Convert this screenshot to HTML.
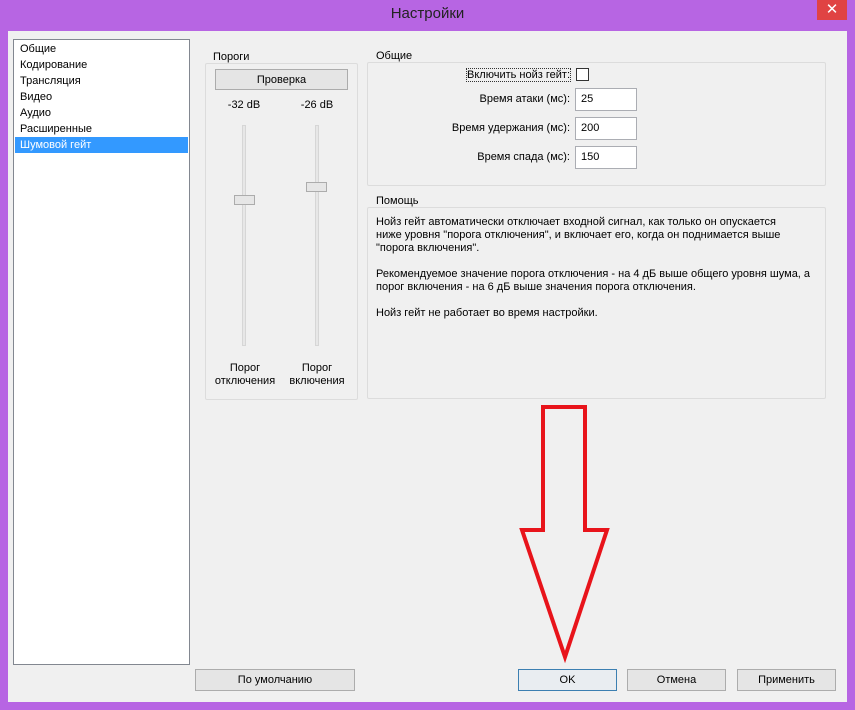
<!DOCTYPE html>
<html><head><meta charset="utf-8"><style>
*{margin:0;padding:0;box-sizing:border-box}
body{width:855px;height:710px;background:#b765e3;font-family:"Liberation Sans",sans-serif;font-size:11px;color:#000;position:relative;overflow:hidden}
.a{position:absolute}
.client{left:8px;top:31px;width:839px;height:671px;background:#f0f0f0}
.title{left:0;top:5px;width:855px;text-align:center;font-size:15px;color:#222}
.close{left:817px;top:0;width:30px;height:20px;background:#e04343;color:#fff;text-align:center;font-size:15px;line-height:20px}
.list{left:13px;top:39px;width:177px;height:626px;background:#fff;border:1px solid #828790}
.it{left:7px;height:16px;line-height:16px}
.sel{left:15px;top:137px;width:173px;height:16px;background:#3399ff;color:#fff;padding-left:5px;line-height:16px}
.grp{border:1px solid #dcdcdc;border-radius:2px}
.gl{background:#f0f0f0;padding:0 3px}
.btn{background:#e5e5e5;border:1px solid #acacac;text-align:center;line-height:20px}
.inp{background:#fff;border:1px solid #abadb3;width:62px;height:23px;padding:4px 0 0 5px}
.lab{text-align:right;width:200px}
.track{width:4px;background:#e7e7e7;border:1px solid #d6d6d6}
.thumb{width:21px;height:10px;background:#e6e6e6;border:1px solid #acacac}
.c{text-align:center}
.help{white-space:nowrap}
</style></head><body>
<div class="a title">Настройки</div>
<div class="a close">✕</div>
<div class="a client"></div>
<div class="a list"></div>
<div class="a it" style="left:20px;top:41px">Общие</div>
<div class="a it" style="left:20px;top:57px">Кодирование</div>
<div class="a it" style="left:20px;top:73px">Трансляция</div>
<div class="a it" style="left:20px;top:89px">Видео</div>
<div class="a it" style="left:20px;top:105px">Аудио</div>
<div class="a it" style="left:20px;top:121px">Расширенные</div>
<div class="a sel">Шумовой гейт</div>

<div class="a grp" style="left:205px;top:63px;width:153px;height:337px"></div>
<div class="a gl" style="left:210px;top:51px">Пороги</div>
<div class="a btn" style="left:215px;top:69px;width:133px;height:21px">Проверка</div>
<div class="a c" style="left:219px;top:99px;width:50px">-32 dB</div>
<div class="a c" style="left:292px;top:99px;width:50px">-26 dB</div>
<div class="a track" style="left:242px;top:125px;height:221px"></div>
<div class="a track" style="left:315px;top:125px;height:221px"></div>
<div class="a thumb" style="left:234px;top:195px"></div>
<div class="a thumb" style="left:306px;top:182px"></div>
<div class="a c" style="left:205px;top:362px;width:80px;line-height:13px">Порог<br>отключения</div>
<div class="a c" style="left:277px;top:362px;width:80px;line-height:13px">Порог<br>включения</div>

<div class="a grp" style="left:367px;top:62px;width:459px;height:124px"></div>
<div class="a gl" style="left:373px;top:50px">Общие</div>
<div class="a lab" style="left:370px;top:69px"><span style="outline:1px dotted #333">Включить нойз гейт:</span></div>
<div class="a" style="left:576px;top:68px;width:13px;height:13px;background:#fff;border:1px solid #333"></div>
<div class="a lab" style="left:370px;top:93px">Время атаки (мс):</div>
<div class="a lab" style="left:370px;top:122px">Время удержания (мс):</div>
<div class="a lab" style="left:370px;top:151px">Время спада (мс):</div>
<div class="a inp" style="left:575px;top:88px">25</div>
<div class="a inp" style="left:575px;top:117px">200</div>
<div class="a inp" style="left:575px;top:146px">150</div>

<div class="a grp" style="left:367px;top:207px;width:459px;height:192px"></div>
<div class="a gl" style="left:373px;top:195px">Помощь</div>
<div class="a help" style="left:376px;top:216px;line-height:13px">Нойз гейт автоматически отключает входной сигнал, как только он опускается<br>ниже уровня "порога отключения", и включает его, когда он поднимается выше<br>"порога включения".<br><br>Рекомендуемое значение порога отключения - на 4 дБ выше общего уровня шума, а<br>порог включения - на 6 дБ выше значения порога отключения.<br><br>Нойз гейт не работает во время настройки.</div>

<div class="a btn" style="left:195px;top:669px;width:160px;height:22px">По умолчанию</div>
<div class="a btn" style="left:518px;top:669px;width:99px;height:22px;border-color:#3c7fb1;background:#e9edf1">OK</div>
<div class="a btn" style="left:627px;top:669px;width:99px;height:22px">Отмена</div>
<div class="a btn" style="left:737px;top:669px;width:99px;height:22px">Применить</div>

<svg class="a" style="left:0;top:0" width="855" height="710"><polygon points="543,407 585,407 585,530 607,530 565,657 522,530 543,530" fill="none" stroke="#e8141b" stroke-width="4" stroke-linejoin="miter"/></svg>
</body></html>
